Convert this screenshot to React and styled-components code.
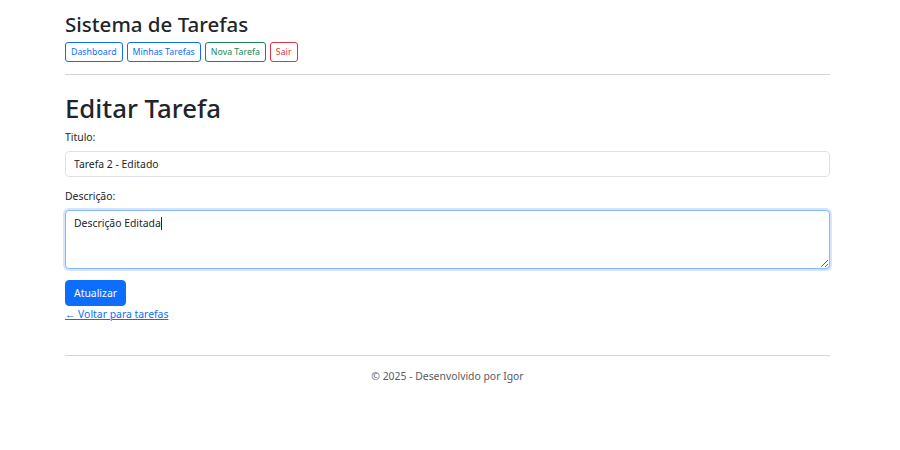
import React from 'react';
import styled, { createGlobalStyle } from 'styled-components';

const GlobalStyle = createGlobalStyle`
  html, body {
    margin: 0;
    padding: 0;
    background: #fff;
  }
  body {
    font-family: "Noto Sans", "Open Sans", sans-serif;
    color: #212529;
    font-size: 10.4px;
  }
`;

const Page = styled.div`
  width: 765px;
  margin-left: 65px;
  padding-top: 12px;
`;

const Header = styled.header`
  display: flex;
  flex-direction: column;
`;

const Brand = styled.h1`
  margin: 0;
  font-size: 20.5px;
  font-weight: 500;
  line-height: 24px;
`;

const Nav = styled.nav`
  display: flex;
  gap: 4px;
  margin-top: 6px;
`;

const tones = {
  primary: '#0d6efd',
  success: '#198754',
  danger: '#dc3545',
};

const NavButton = styled.a`
  display: inline-flex;
  align-items: center;
  height: 20px;
  box-sizing: border-box;
  padding: 0 5px;
  border: 1px solid ${(p) => tones[p.$tone]};
  border-radius: 3px;
  color: ${(p) => tones[p.$tone]};
  font-size: 8.8px;
  text-decoration: none;
`;

const Rule = styled.hr`
  margin: ${(p) => p.$space};
  border: 0;
  border-top: 1px solid #d3d4d5;
`;

const Title = styled.h2`
  margin: 17px 0 5px;
  font-size: 25.8px;
  font-weight: 500;
  line-height: 32px;
`;

const Form = styled.form`
  display: flex;
  flex-direction: column;
`;

const Field = styled.div`
  display: flex;
  flex-direction: column;
  margin-bottom: 11px;
`;

const Label = styled.label`
  line-height: 16px;
  margin-bottom: 6px;
`;

const Input = styled.input`
  box-sizing: border-box;
  height: 26px;
  padding: 0 8px;
  border: 1px solid #dee2e6;
  border-radius: 4px;
  font: inherit;
  color: #212529;
  outline: none;
`;

const TextAreaBox = styled.div`
  position: relative;
  display: flex;
  flex-direction: column;
`;

const TextArea = styled.textarea`
  box-sizing: border-box;
  height: 59px;
  padding: 4px 8px;
  border: 1px solid #86b7fe;
  border-radius: 4px;
  box-shadow: 0 0 0 2px rgba(13, 110, 253, 0.18);
  font: inherit;
  line-height: 16px;
  color: #212529;
  outline: none;
  resize: vertical;
`;

const CaretLayer = styled.div`
  position: absolute;
  left: 9px;
  top: 5px;
  line-height: 16px;
  color: transparent;
  pointer-events: none;
`;

const Caret = styled.span`
  display: inline-block;
  width: 1px;
  height: 13px;
  vertical-align: -3px;
  background: #212529;
`;

const SubmitButton = styled.button`
  align-self: flex-start;
  height: 26px;
  padding: 0 8px;
  border: 1px solid #0d6efd;
  border-radius: 4px;
  background: #0d6efd;
  color: #fff;
  font: inherit;
`;

const BackLink = styled.a`
  align-self: flex-start;
  color: #0d6efd;
  line-height: 16px;
  text-decoration: underline;
`;

const Footer = styled.footer`
  text-align: center;
  color: #595c5f;
  line-height: 16px;
`;

export default function App() {
  const description = 'Descrição Editada';
  return (
    <>
      <GlobalStyle />
      <Page>
        <Header>
          <Brand>Sistema de Tarefas</Brand>
          <Nav>
            <NavButton href="#" $tone="primary">Dashboard</NavButton>
            <NavButton href="#" $tone="primary">Minhas Tarefas</NavButton>
            <NavButton href="#" $tone="success">Nova Tarefa</NavButton>
            <NavButton href="#" $tone="danger">Sair</NavButton>
          </Nav>
        </Header>
        <Rule $space="12px 0 0" />
        <Title>Editar Tarefa</Title>
        <Form onSubmit={(e) => e.preventDefault()}>
          <Field>
            <Label>Titulo:</Label>
            <Input defaultValue="Tarefa 2 - Editado" />
          </Field>
          <Field>
            <Label>Descrição:</Label>
            <TextAreaBox>
              <TextArea defaultValue={description} />
              <CaretLayer>
                {description}
                <Caret />
              </CaretLayer>
            </TextAreaBox>
          </Field>
          <SubmitButton type="submit">Atualizar</SubmitButton>
          <BackLink href="#">← Voltar para tarefas</BackLink>
        </Form>
        <Rule $space="33px 0 12px" />
        <Footer>© 2025 - Desenvolvido por Igor</Footer>
      </Page>
    </>
  );
}
